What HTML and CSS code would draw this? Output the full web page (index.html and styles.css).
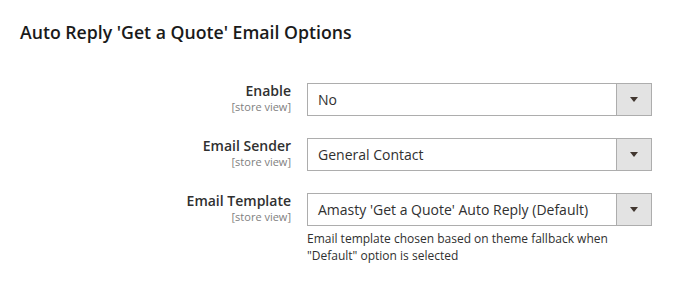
FILE: index.html
```html
<!DOCTYPE html>
<html lang="en">
<head>
  <meta charset="UTF-8">
  <meta name="viewport" content="width=device-width, initial-scale=1.0">
  <title>Auto Reply Email Options</title>
  <link rel="stylesheet" href="styles.css">
</head>
<body>
  <div class="section">
    <h2 class="section-title">Auto Reply 'Get a Quote' Email Options</h2>

    <div class="field">
      <div class="field-label">
        <span class="label-text">Enable</span>
        <span class="scope">[store view]</span>
      </div>
      <div class="field-control">
        <div class="select">
          <span class="select-value">No</span>
          <span class="select-arrow"><i class="triangle"></i></span>
        </div>
      </div>
    </div>

    <div class="field">
      <div class="field-label">
        <span class="label-text">Email Sender</span>
        <span class="scope">[store view]</span>
      </div>
      <div class="field-control">
        <div class="select">
          <span class="select-value">General Contact</span>
          <span class="select-arrow"><i class="triangle"></i></span>
        </div>
      </div>
    </div>

    <div class="field">
      <div class="field-label">
        <span class="label-text">Email Template</span>
        <span class="scope">[store view]</span>
      </div>
      <div class="field-control">
        <div class="select">
          <span class="select-value">Amasty 'Get a Quote' Auto Reply (Default)</span>
          <span class="select-arrow"><i class="triangle"></i></span>
        </div>
        <p class="note">Email template chosen based on theme fallback when "Default" option is selected</p>
      </div>
    </div>
  </div>
</body>
</html>
```

FILE: styles.css
```css
body {
  margin: 0;
  background-color: #fff;
  font-family: "Open Sans", "Liberation Sans", sans-serif;
  color: #303030;
}

.section {
  padding: 20px 20px 0 20px;
}

.section-title {
  margin: 0 0 39px 0;
  font-size: 17.7px;
  font-weight: 600;
  line-height: 24px;
  color: #1a1a1a;
}

.field {
  display: grid;
  grid-template-columns: 271px 345px;
  column-gap: 16px;
  margin-bottom: 22px;
}

.field-label {
  display: flex;
  flex-direction: column;
  align-items: flex-end;
  text-align: right;
}

.label-text {
  font-size: 14px;
  font-weight: 600;
  line-height: 1.2;
  color: #303030;
}

.scope {
  font-size: 11px;
  line-height: 1.2;
  color: #808080;
}

.select {
  display: flex;
  height: 33px;
  box-sizing: border-box;
  border: 1px solid #adadad;
  background-color: #fff;
}

.select-value {
  flex: 1;
  padding: 0 10px;
  font-size: 14px;
  line-height: 31px;
  color: #303030;
  white-space: nowrap;
}

.select-arrow {
  display: flex;
  align-items: center;
  justify-content: center;
  width: 34px;
  border-left: 1px solid #adadad;
  background-color: #e3e3e3;
}

.triangle {
  width: 0;
  height: 0;
  border-left: 4px solid transparent;
  border-right: 4px solid transparent;
  border-top: 5px solid #41362f;
}

.note {
  margin: 5px 0 0 0;
  max-width: 310px;
  font-size: 12px;
  line-height: 1.4;
  color: #303030;
}
```
